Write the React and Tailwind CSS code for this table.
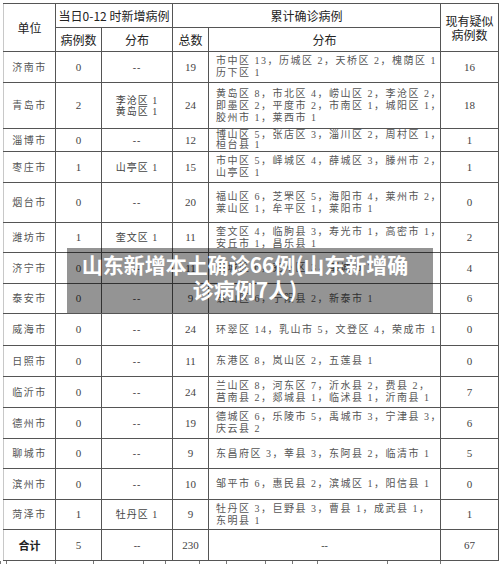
import React from "react";

const rows = [
  { name: "济南市", n: "0", d: ["--"], t: "19", dist: ["市中区 13，历城区 2，天桥区 2，槐荫区 1", "历下区 1"], s: "16", h: "h-[31px]" },
  { name: "青岛市", n: "2", d: ["李沧区 1", "黄岛区 1"], t: "24", dist: ["黄岛区 8，市北区 4，崂山区 2，李沧区 2，", "即墨区 2，平度市 2，市南区 1，城阳区 1，", "胶州市 1，莱西市 1"], s: "18", h: "h-[46px]" },
  { name: "淄博市", n: "0", d: ["--"], t: "12", dist: ["博山区 5，张店区 3，淄川区 2，周村区 1，", "桓台县 1"], s: "1", h: "h-[23px]", tight: true },
  { name: "枣庄市", n: "1", d: ["山亭区 1"], t: "15", dist: ["市中区 5，峄城区 4，薛城区 3，滕州市 2，", "山亭区 1"], s: "1", h: "h-[31px]" },
  { name: "烟台市", n: "0", d: ["--"], t: "20", dist: ["福山区 6，芝罘区 5，海阳市 4，莱州市 2，", "莱山区 1，牟平区 1，莱阳市 1"], s: "0", h: "h-[40px]" },
  { name: "潍坊市", n: "1", d: ["奎文区 1"], t: "11", dist: ["奎文区 4，临朐县 3，寿光市 1，高密市 1，", "安丘市 1，昌乐县 1"], s: "2", h: "h-[30px]" },
  { name: "济宁市", n: "0", d: ["--"], t: "11", dist: ["任城区 6，兖州区 3，邹城市 2"], s: "4", h: "h-[31px]" },
  { name: "泰安市", n: "0", d: ["--"], t: "9", dist: ["泰山区 6，宁阳县 2，新泰市 1"], s: "6", h: "h-[30px]" },
  { name: "威海市", n: "0", d: ["--"], t: "24", dist: ["环翠区 14，乳山市 5，文登区 4，荣成市 1"], s: "0", h: "h-[32px]" },
  { name: "日照市", n: "0", d: ["--"], t: "11", dist: ["东港区 8，岚山区 2，五莲县 1"], s: "0", h: "h-[31px]" },
  { name: "临沂市", n: "0", d: ["--"], t: "24", dist: ["兰山区 8，河东区 7，沂水县 2，费县 2，", "莒南县 2，郯城县 1，临沭县 1，沂南县 1"], s: "7", h: "h-[31px]" },
  { name: "德州市", n: "0", d: ["--"], t: "19", dist: ["德城区 6，乐陵市 5，禹城市 3，宁津县 3，", "庆云县 2"], s: "6", h: "h-[31px]" },
  { name: "聊城市", n: "0", d: ["--"], t: "9", dist: ["东昌府区 3，莘县 3，东阿县 2，临清市 1"], s: "5", h: "h-[30px]" },
  { name: "滨州市", n: "0", d: ["--"], t: "10", dist: ["邹平市 6，惠民县 2，滨城区 1，阳信县 1"], s: "0", h: "h-[31px]" },
  { name: "菏泽市", n: "1", d: ["牡丹区 1"], t: "9", dist: ["牡丹区 3，巨野县 3，曹县 1，成武县 1，", "东明县 1"], s: "1", h: "h-[30px]" },
];

const cjk = { fontFamily: '"Liberation Serif", "Noto Sans CJK SC", serif' };
const hdr = { fontFamily: '"Noto Sans CJK SC", "Liberation Sans", sans-serif' };

const ticks = [6, 55, 93, 143, 165, 199, 226, 265, 292, 317, 387, 440, 498];

export default function App() {
  return (
    <div className="relative w-[500px] h-[564px] bg-white overflow-hidden">
      <div className="pt-[3px] pl-[3px]">
        <table className="border-collapse table-fixed w-[495px] text-[#444]" style={cjk}>
          <colgroup>
            <col className="w-[52px]" />
            <col className="w-[46px]" />
            <col className="w-[71px]" />
            <col className="w-[36px]" />
            <col className="w-[232px]" />
            <col className="w-[58px]" />
          </colgroup>
          <thead>
            <tr className="h-[24px]">
              <th rowSpan={2} className="border border-[#555] border-l-[#c8c8c8] border-l-dotted font-normal text-[12px] text-[#222] text-center" style={hdr}>单位</th>
              <th colSpan={2} className="border border-[#555] font-normal text-[12px] text-[#222] text-center" style={hdr}>当日0-12 时新增病例</th>
              <th colSpan={2} className="border border-[#555] font-normal text-[12px] text-[#222] text-center" style={hdr}>累计确诊病例</th>
              <th rowSpan={2} className="border border-[#555] font-normal text-[12px] leading-[14px] text-[#222] text-center" style={hdr}>现有疑似<br />病例数</th>
            </tr>
            <tr className="h-[24px]">
              <th className="border border-[#555] font-normal text-[12px] text-[#222] text-center" style={hdr}>病例数</th>
              <th className="border border-[#555] font-normal text-[12px] text-[#222] text-center" style={hdr}>分布</th>
              <th className="border border-[#555] font-normal text-[12px] text-[#222] text-center" style={hdr}>总数</th>
              <th className="border border-[#555] font-normal text-[12px] text-[#222] text-center" style={hdr}>分布</th>
            </tr>
          </thead>
          <tbody>
            {rows.map((r) => (
              <tr key={r.name} className={r.h}>
                <td className="border border-[#555] border-l-[#c8c8c8] border-l-dotted text-center text-[10px] tracking-[1.5px] text-[#555] p-0">{r.name}</td>
                <td className="border border-[#555] text-center text-[11px] p-0">{r.n}</td>
                <td className="border border-[#555] text-center text-[10px] tracking-[1px] leading-[11px] p-0">
                  {r.d.map((x, i) => (
                    <div key={i}>{x}</div>
                  ))}
                </td>
                <td className="border border-[#555] text-center text-[11px] p-0">{r.t}</td>
                <td className={`border border-[#555] text-left text-[10px] tracking-[1.5px] px-[7px] py-0 text-[#555] ${r.tight ? "leading-[10px]" : "leading-[12px]"}`}>
                  {r.dist.map((x, i) => (
                    <div key={i} className="whitespace-nowrap">{x}</div>
                  ))}
                </td>
                <td className="border border-[#555] text-center text-[11px] p-0">{r.s}</td>
              </tr>
            ))}
            <tr className="h-[31px]">
              <td className="border border-[#555] border-l-[#c8c8c8] border-l-dotted text-center text-[11px] font-bold text-[#222] p-0" style={hdr}>合计</td>
              <td className="border border-[#555] text-center text-[11px] p-0">5</td>
              <td className="border border-[#555] text-center text-[10px] p-0">--</td>
              <td className="border border-[#555] text-center text-[11px] p-0">230</td>
              <td className="border border-[#555] text-center text-[10px] p-0">--</td>
              <td className="border border-[#555] text-center text-[11px] p-0">67</td>
            </tr>
          </tbody>
        </table>
      </div>
      <div className="flex h-[4px]">
        {ticks.map((x, i) => (
          <div
            key={x}
            className="border-l border-[#777] h-full"
            style={{ width: i === 0 ? x : x - ticks[i - 1], marginLeft: i === 0 ? 0 : 0 }}
          />
        ))}
      </div>
      <div
        className="absolute left-[67px] top-[248px] w-[366px] h-[65px] bg-[rgba(0,0,0,0.42)] pl-[10px] pr-[20px] pt-[4px] text-center text-white font-bold text-[21px] leading-[25px]"
        style={hdr}
      >
        山东新增本土确诊66例(山东新增确<br />诊病例7人)
      </div>
    </div>
  );
}
